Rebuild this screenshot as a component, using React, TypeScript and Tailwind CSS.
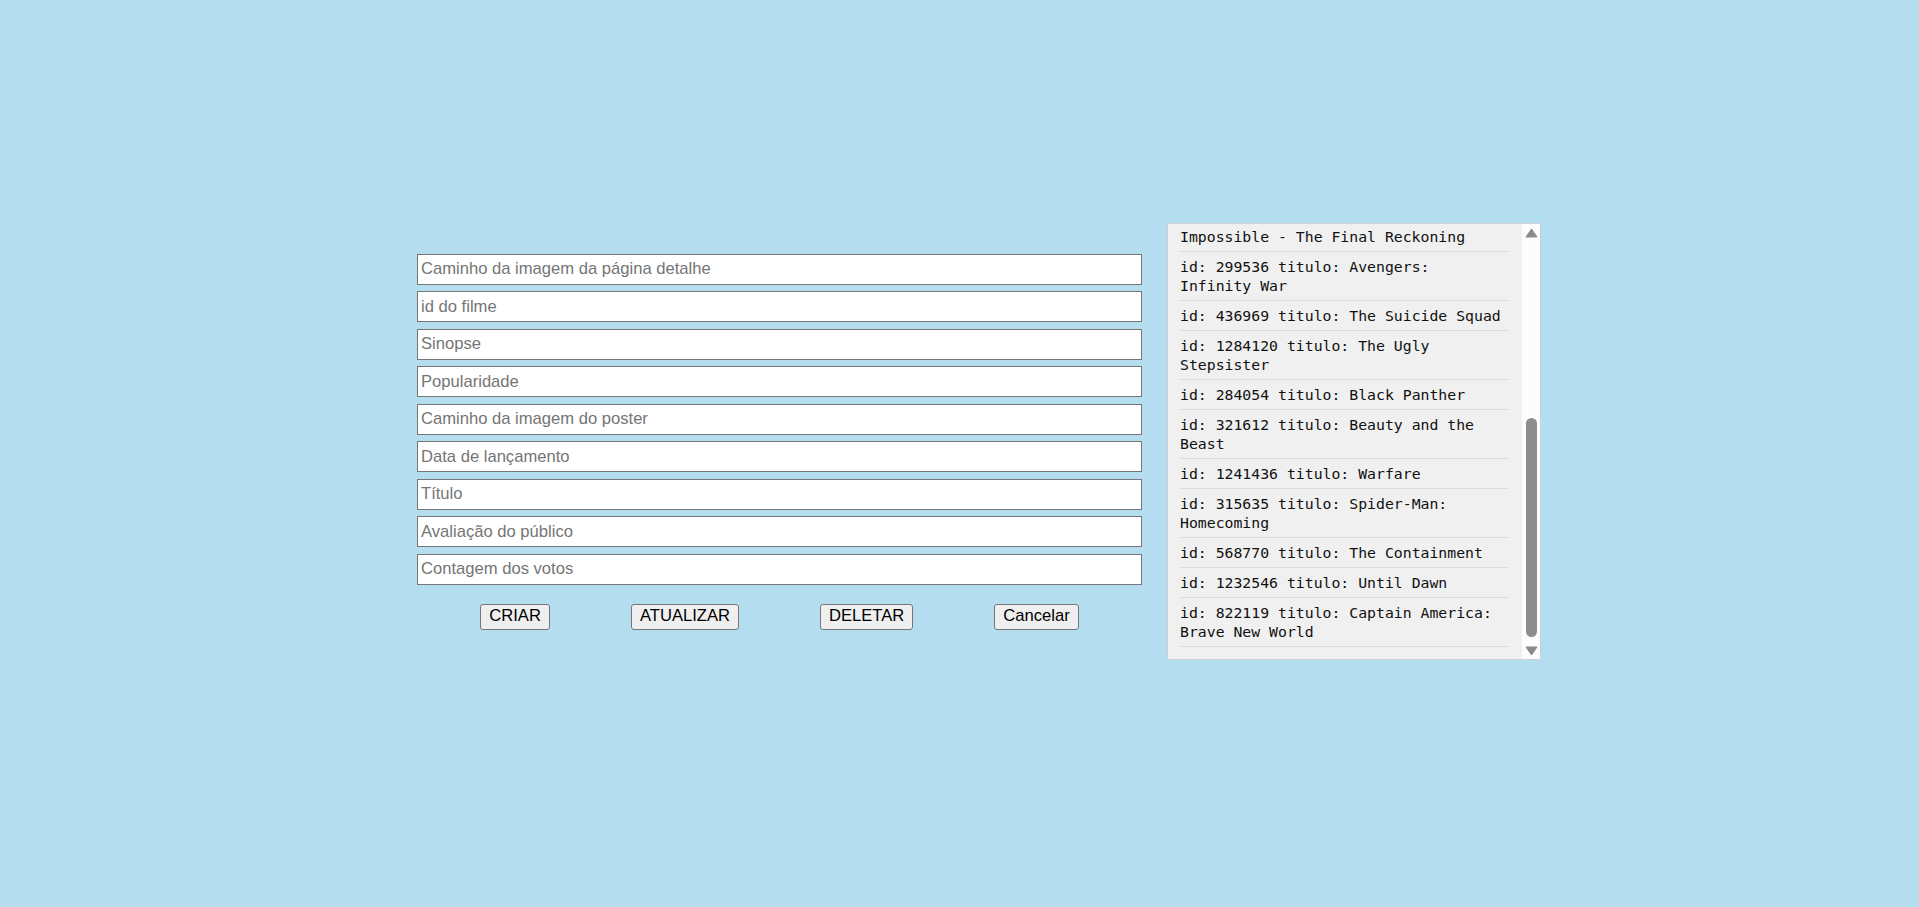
import { useLayoutEffect, useRef } from 'react';

const campos = [
    'Caminho da imagem da página detalhe',
    'id do filme',
    'Sinopse',
    'Popularidade',
    'Caminho da imagem do poster',
    'Data de lançamento',
    'Título',
    'Avaliação do público',
    'Contagem dos votos',
];

const botoes = ['CRIAR', 'ATUALIZAR', 'DELETAR', 'Cancelar'];

const filmes = [
    { id: 1311031, titulo: 'Demon Slayer' },
    { id: 617126, titulo: 'The Fantastic 4: First Steps' },
    { id: 1061474, titulo: 'Superman' },
    { id: 1100988, titulo: '28 Years Later' },
    { id: 552524, titulo: 'Lilo & Stitch' },
    { id: 1087192, titulo: 'How to Train Your Dragon' },
    { id: 986056, titulo: 'Thunderbolts*' },
    { id: 1197306, titulo: 'A Working Man' },
    { id: 574475, titulo: 'Final Destination Bloodlines' },
    { id: 575265, titulo: 'Mission: Impossible - The Final Reckoning' },
    { id: 299536, titulo: 'Avengers: Infinity War' },
    { id: 436969, titulo: 'The Suicide Squad' },
    { id: 1284120, titulo: 'The Ugly Stepsister' },
    { id: 284054, titulo: 'Black Panther' },
    { id: 321612, titulo: 'Beauty and the Beast' },
    { id: 1241436, titulo: 'Warfare' },
    { id: 315635, titulo: 'Spider-Man: Homecoming' },
    { id: 568770, titulo: 'The Containment' },
    { id: 1232546, titulo: 'Until Dawn' },
    { id: 822119, titulo: 'Captain America: Brave New World' },
];

function Seta({ baixo }: { baixo?: boolean }) {
    return (
        <svg width="13" height="10" viewBox="0 0 13 10" className={baixo ? 'rotate-180' : ''}>
            <path d="M6.5 1 L12 9 H1 Z" fill="#8a8a8a" stroke="#8a8a8a" strokeWidth="1" strokeLinejoin="round" />
        </svg>
    );
}

function ListaFilmes() {
    const ref = useRef<HTMLDivElement>(null);

    useLayoutEffect(() => {
        if (ref.current) ref.current.scrollTop = ref.current.scrollHeight;
    }, []);

    return (
        <div className="flex h-[437px] w-[374px] border border-[#cfcfcf] bg-[#f0f0f0]">
            <div
                ref={ref}
                className="flex-1 overflow-y-scroll pl-[12px] pr-[13px] py-[12px] [scrollbar-width:none] [&::-webkit-scrollbar]:hidden"
            >
                {filmes.map((f) => (
                    <div
                        key={f.id}
                        className="border-b border-[#dcdcdc] py-[5px] pr-[4px] font-['DejaVu_Sans_Mono',monospace] text-[14.8px] leading-[19px] text-[#111]"
                    >
                        id: {f.id} titulo: {f.titulo}
                    </div>
                ))}
            </div>
            <div className="flex w-[18px] flex-col bg-[#fcfcfc]">
                <div className="flex h-[17px] items-center justify-center">
                    <Seta />
                </div>
                <div className="flex flex-1 flex-col justify-end pb-[5px] pt-[2px]">
                    <div className="mx-auto h-[219px] w-[11px] rounded-full bg-[#8d8d8d]" />
                </div>
                <div className="flex h-[17px] items-center justify-center">
                    <Seta baixo />
                </div>
            </div>
        </div>
    );
}

export default function App() {
    return (
        <div className="min-h-screen bg-[#b4def0] pl-[417px] pt-[223px] font-['Liberation_Sans',Arial,sans-serif]">
            <div className="flex items-center gap-[25px]">
                <div className="flex w-[725px] flex-col">
                    <div className="flex flex-col gap-[6.5px]">
                        {campos.map((c) => (
                            <input
                                key={c}
                                type="text"
                                placeholder={c}
                                className="h-[31px] w-full border border-[#767676] bg-white px-[3px] text-[16.6px] text-black outline-none placeholder:text-[#757575]"
                            />
                        ))}
                    </div>
                    <div className="mt-[19px] flex justify-center gap-[81px]">
                        {botoes.map((b) => (
                            <button
                                key={b}
                                type="button"
                                className="h-[26px] rounded-[3px] border border-[#767676] bg-[#efefef] px-[8px] text-[16.6px] leading-none text-black"
                            >
                                {b}
                            </button>
                        ))}
                    </div>
                </div>
                <ListaFilmes />
            </div>
        </div>
    );
}
